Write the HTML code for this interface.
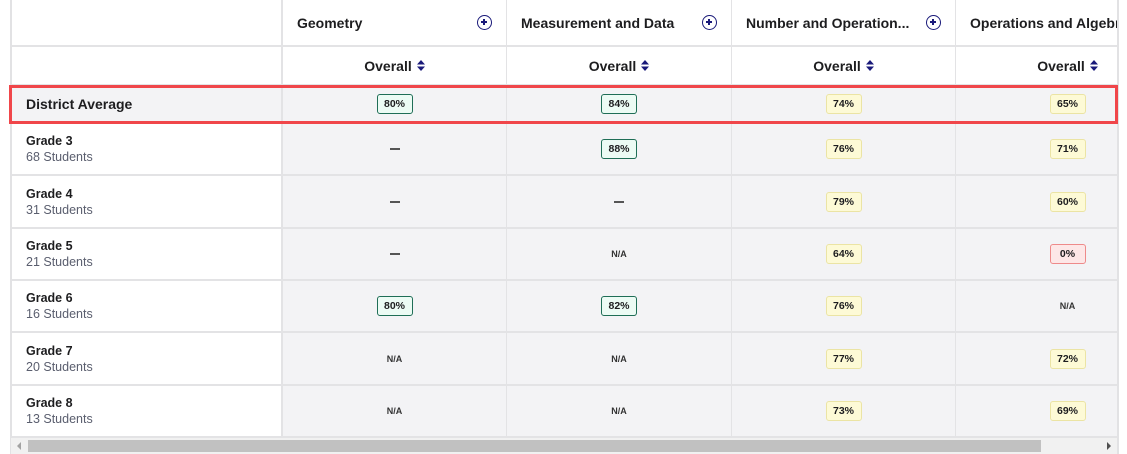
<!DOCTYPE html>
<html><head><style>
*{margin:0;padding:0;box-sizing:border-box}
body{width:1127px;height:454px;background:#fff;font-family:"Liberation Sans",Arial,sans-serif;position:relative;overflow:hidden;color:#1d1d1f}
.wrap{position:absolute;left:10px;top:0;width:1109px;height:454px;overflow:hidden;border-left:2px solid #e2e2e4;border-right:2px solid #e2e2e4}
.c{position:absolute;border-bottom:2px solid #e3e3e5;border-right:1px solid #e3e3e5;display:flex;align-items:center;justify-content:center}
.g{background:#f3f3f5}
.lab{background:#fff;justify-content:center;padding-left:14px;flex-direction:column;align-items:flex-start;border-right:2px solid #e3e3e5}
.lab b{font-size:12.5px;font-weight:bold;color:#1d1d1f}
.lab span{font-size:12.5px;color:#5a5e6e;margin-top:2px}
.hd{justify-content:space-between;padding:0 14px 0 14px;font-weight:bold;font-size:14px;white-space:nowrap;background:#fff}
.sub{font-weight:bold;font-size:14px;background:#fff}
.plus{width:15px;height:15px;border:1.6px solid #1a1a7a;border-radius:50%;position:relative;flex:none}
.plus:before{content:"";position:absolute;left:3.2px;top:5.1px;width:6px;height:1.6px;background:#1a1a7a}
.plus:after{content:"";position:absolute;left:5.4px;top:2.9px;width:1.6px;height:6px;background:#1a1a7a}
.sort{display:inline-block;margin-left:5px;vertical-align:middle}
.bd{width:36px;height:20px;border-radius:3px;font-size:10.5px;font-weight:bold;display:flex;align-items:center;justify-content:center}
.gr{background:#ecfbf4;border:1px solid #1f6e56}
.ye{background:#fdfad6;border:1px solid #ebe4a4}
.re{background:#fde7e7;border:1px solid #ee8a8a}
.na{font-size:9px;font-weight:bold;color:#333}
.dash{width:10px;height:2px;background:#555}
</style></head><body>
<div class="wrap" id="w"></div>
<div style="position:absolute;left:9px;top:85px;width:1109px;height:39px;border:3px solid #f0464a;pointer-events:none"></div>
<div style="position:absolute;left:11px;top:438px;width:1106px;height:16px;background:#f1f1f1"></div>
<div style="position:absolute;left:28px;top:440px;width:1013px;height:12px;background:#c1c1c1"></div>
<div style="position:absolute;left:17px;top:442px;width:0;height:0;border-top:4px solid transparent;border-bottom:4px solid transparent;border-right:4px solid #a3a3a3"></div>
<div style="position:absolute;left:1107px;top:442px;width:0;height:0;border-top:4px solid transparent;border-bottom:4px solid transparent;border-left:4px solid #505050"></div>
<script>
var w=document.getElementById('w');var h='';
var xs=[0,271,495,720,944],ws=[271,224,225,224,224];
var heads=['Geometry','Measurement and Data','Number and Operation...','Operations and Algebraic Thinking'];
var rows=[[86,38],[124,52],[176,53],[229,52],[281,52],[333,53],[386,52]];
var labs=[['District Average',''],['Grade 3','68 Students'],['Grade 4','31 Students'],['Grade 5','21 Students'],['Grade 6','16 Students'],['Grade 7','20 Students'],['Grade 8','13 Students']];
var data=[['g80','g84','y74','y65'],['-','g88','y76','y71'],['-','-','y79','y60'],['-','N','y64','r0'],['g80','g82','y76','N'],['N','N','y77','y72'],['N','N','y73','y69']];
var sort='<svg class="sort" width="8" height="11" viewBox="0 0 8 11"><path d="M4 0L8 4.5H0Z M4 11L0 6.5H8Z" fill="#1a1a7a"/></svg>';
h+='<div class="c" style="left:0;top:0;width:271px;height:47px;background:#fff;border-right:2px solid #e3e3e5"></div>';
h+='<div class="c" style="left:0;top:47px;width:271px;height:39px;background:#fff;border-right:2px solid #e3e3e5"></div>';
for(var i=1;i<5;i++){
 h+='<div class="c hd" style="left:'+xs[i]+'px;top:0;width:'+ws[i]+'px;height:47px"><span>'+heads[i-1]+'</span><span class="plus"></span></div>';
 h+='<div class="c sub" style="left:'+xs[i]+'px;top:47px;width:'+ws[i]+'px;height:39px">Overall'+sort+'</div>';
}
for(var r=0;r<7;r++){
 var t=rows[r][0],hh=rows[r][1];
 if(r==0)h+='<div class="c g" style="left:0;top:'+t+'px;width:271px;height:'+hh+'px;justify-content:flex-start;padding-left:14px;border-right:2px solid #e3e3e5"><b style="font-size:14px">District Average</b></div>';
 else h+='<div class="c lab" style="left:0;top:'+t+'px;width:271px;height:'+hh+'px"><b>'+labs[r][0]+'</b><span>'+labs[r][1]+'</span></div>';
 for(var i=1;i<5;i++){
  var d=data[r][i-1],inner;
  if(d=='-')inner='<div class="dash"></div>';
  else if(d=='N')inner='<span class="na">N/A</span>';
  else{var cl={g:'gr',y:'ye',r:'re'}[d[0]];inner='<div class="bd '+cl+'">'+d.slice(1)+'%</div>';}
  h+='<div class="c g" style="left:'+xs[i]+'px;top:'+t+'px;width:'+ws[i]+'px;height:'+hh+'px">'+inner+'</div>';
 }
}
w.innerHTML=h;
</script>
</body></html>
